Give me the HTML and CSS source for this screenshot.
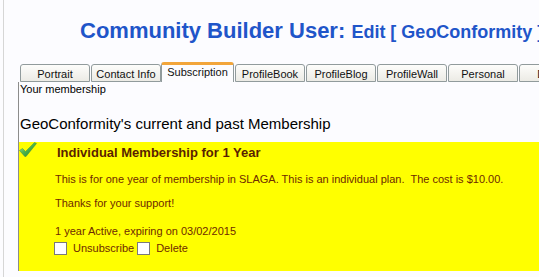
FILE: index.html
```html
<!DOCTYPE html>
<html lang="en">
<head>
    <meta charset="UTF-8">
    <title>Community Builder User: Edit</title>
    <link rel="stylesheet" href="styles.css">
</head>
<body>
    <div class="frame">
        <h1 class="title">Community Builder User: <span class="title-small">Edit [ GeoConformity ]</span></h1>

        <div class="tabs">
            <div class="tab">Portrait</div>
            <div class="tab">Contact Info</div>
            <div class="tab active">Subscription</div>
            <div class="tab">ProfileBook</div>
            <div class="tab">ProfileBlog</div>
            <div class="tab">ProfileWall</div>
            <div class="tab">Personal</div>
            <div class="tab">Details</div>
        </div>

        <div class="panel">
            <div class="panel-caption">Your membership</div>
            <div class="panel-heading">GeoConformity's current and past Membership</div>

            <div class="plan">
                <div class="plan-head">
                    <svg class="check" width="18" height="16" viewBox="0 0 18 16">
                        <defs>
                            <linearGradient id="tick" x1="0" y1="0" x2="1" y2="1">
                                <stop offset="0" stop-color="#b8ecb8"/>
                                <stop offset="0.45" stop-color="#4fb84f"/>
                                <stop offset="1" stop-color="#1f7f2a"/>
                            </linearGradient>
                        </defs>
                        <path d="M0.5 8.5 L3.5 6.5 L6.5 9.5 L15.5 0.5 L17.5 1.5 L7 14.5 L5.8 14.5 Z" fill="url(#tick)" stroke="#3b8f46" stroke-width="0.5"/>
                    </svg>
                    <div class="plan-title">Individual Membership for 1 Year</div>
                </div>
                <p class="plan-text">This is for one year of membership in SLAGA. This is an individual plan.&nbsp; The cost is $10.00.</p>
                <p class="plan-text">Thanks for your support!</p>
                <p class="plan-text plan-status">1 year Active, expiring on 03/02/2015</p>
                <div class="plan-actions">
                    <label class="option"><span class="box"></span>Unsubscribe</label>
                    <label class="option"><span class="box"></span>Delete</label>
                </div>
            </div>
        </div>
    </div>
</body>
</html>
```

FILE: styles.css
```css
* {
    margin: 0;
    padding: 0;
    box-sizing: border-box;
}

body {
    font-family: "Liberation Sans", Arial, sans-serif;
    background: #fcfcff;
    color: #000;
    overflow: hidden;
}

.frame {
    margin-left: 3px;
    border-left: 1px solid #d6d6d6;
    padding-left: 14px;
    height: 277px;
    overflow: hidden;
}

.title {
    margin-top: 18px;
    padding-left: 62px;
    font-size: 22px;
    line-height: 26px;
    font-weight: bold;
    color: #1f55c9;
    white-space: nowrap;
}

.title-small {
    font-size: 18px;
}

.tabs {
    display: flex;
    align-items: flex-end;
    margin-top: 17px;
    padding-left: 2px;
    height: 20px;
    white-space: nowrap;
}

.tab {
    flex: none;
    width: 70px;
    height: 18px;
    margin-right: 1px;
    border: 1px solid #919b9c;
    border-radius: 3px 3px 0 0;
    background: linear-gradient(#fdfdfb, #ecebe5);
    font-size: 11px;
    line-height: 16px;
    padding-top: 1px;
    text-align: center;
    color: #111;
    overflow: hidden;
}

.tab.active {
    width: 73px;
    height: 20px;
    margin-left: -1px;
    border-top: 3px solid #f2a53a;
    border-bottom: none;
    background: #fcfcfe;
    line-height: 15px;
    padding-top: 0;
}

.panel {
    border-left: 1px solid #8c8c8c;
}

.panel-caption {
    font-size: 11px;
    line-height: 13px;
    padding-left: 1px;
    padding-top: 1px;
}

.panel-heading {
    font-size: 15px;
    line-height: 18px;
    margin-top: 19px;
    padding-left: 1px;
}

.plan {
    background: #ffff00;
    margin-top: 9px;
    padding-bottom: 16px;
    color: #6e2a00;
}

.plan-head {
    display: flex;
    align-items: flex-start;
    height: 21px;
}

.check {
    flex: none;
    margin-top: 0;
}

.plan-title {
    margin-left: 20px;
    padding-top: 3px;
    font-size: 13px;
    line-height: 16px;
    font-weight: bold;
    color: #5a1f00;
}

.plan-text {
    font-size: 11px;
    line-height: 13px;
    margin-left: 36px;
    margin-top: 10px;
    white-space: nowrap;
}

.plan-text + .plan-text {
    margin-top: 11px;
}

.plan-text.plan-status {
    margin-top: 15px;
}

.plan-actions {
    display: flex;
    margin-left: 35px;
    margin-top: 4px;
    font-size: 11px;
    line-height: 13px;
}

.option {
    display: flex;
    align-items: center;
    margin-right: 3px;
}

.box {
    width: 13px;
    height: 13px;
    border: 1px solid #7a7a7a;
    background: #fff;
    margin-right: 6px;
}
```
